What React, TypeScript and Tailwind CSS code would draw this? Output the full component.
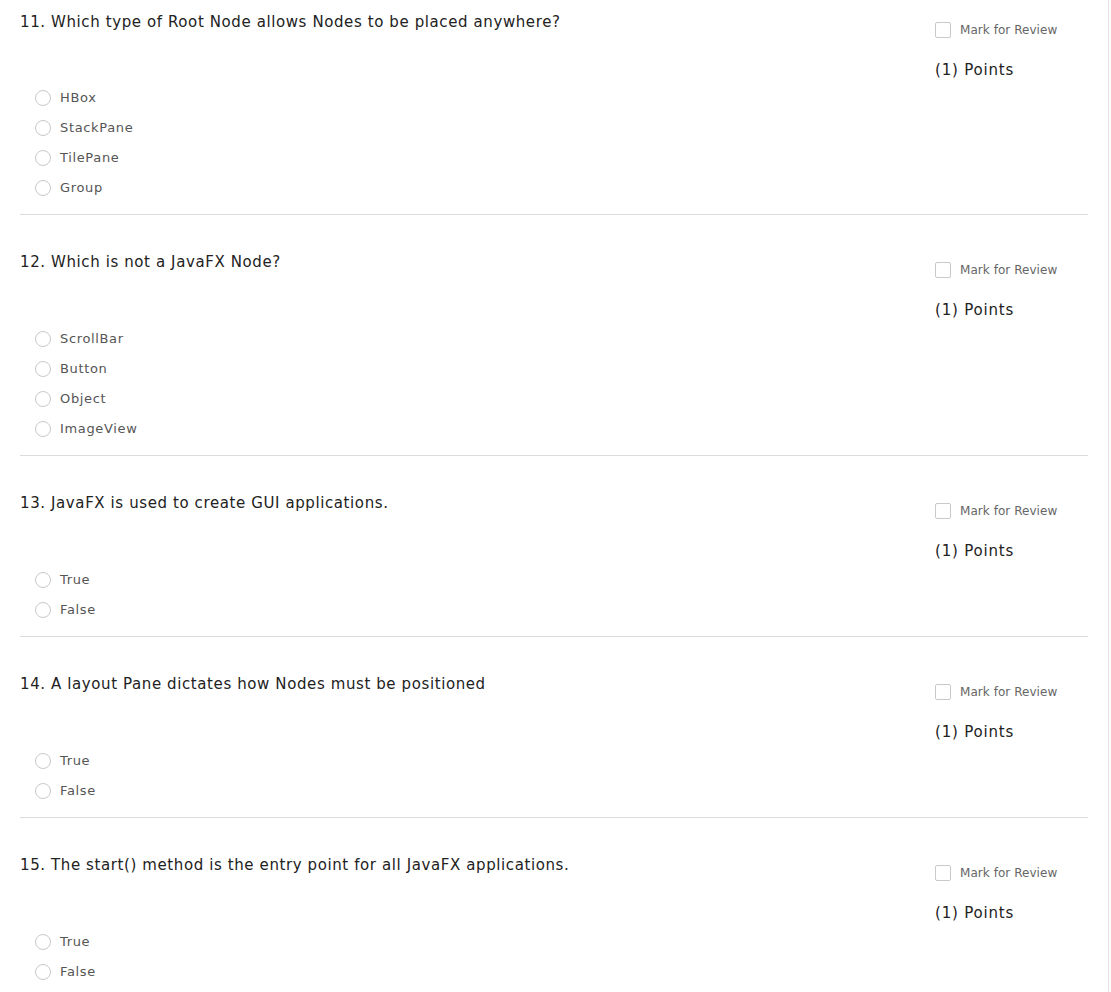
import React from "react";

type Q = { n: number; title: string; options: string[] };

const questions: Q[] = [
  { n: 11, title: "Which type of Root Node allows Nodes to be placed anywhere?", options: ["HBox", "StackPane", "TilePane", "Group"] },
  { n: 12, title: "Which is not a JavaFX Node?", options: ["ScrollBar", "Button", "Object", "ImageView"] },
  { n: 13, title: "JavaFX is used to create GUI applications.", options: ["True", "False"] },
  { n: 14, title: "A layout Pane dictates how Nodes must be positioned", options: ["True", "False"] },
  { n: 15, title: "The start() method is the entry point for all JavaFX applications.", options: ["True", "False"] },
];

function Block({ q, first, last }: { q: Q; first: boolean; last: boolean }) {
  return (
    <div className={`flex ${first ? "pt-[12px]" : "pt-[37px]"} ${last ? "" : "pb-[11px] border-b border-[#dcdcdc]"}`}>
      <div className="flex-1">
        <div className="text-[15px] leading-[20px] text-[#222] tracking-[0.6px]">
          {q.n}. {q.title}
        </div>
        <div className={`${first ? "mt-[51px]" : "mt-[52px]"} pl-[15px]`}>
          {q.options.map((o) => (
            <div key={o} className="flex items-center h-[30px]">
              <span className="w-[16px] h-[16px] rounded-full border border-[#c9c9c9] bg-white shrink-0" />
              <span className="ml-[9px] text-[13px] text-[#555] tracking-[0.65px]">{o}</span>
            </div>
          ))}
        </div>
      </div>
      <div className="w-[153px] shrink-0 pt-[10px]">
        <div className="flex items-center h-[16px]">
          <span className="w-[16px] h-[16px] rounded-[2px] border border-[#c9c9c9] bg-white shrink-0" />
          <span className="ml-[9px] text-[12px] text-[#666] tracking-[0.05px]">Mark for Review</span>
        </div>
        <div className="mt-[22px] text-[15px] leading-[20px] text-[#222] tracking-[0.8px]">(1) Points</div>
      </div>
    </div>
  );
}

export default function App() {
  return (
    <div className="w-[1111px] h-[992px] bg-white overflow-hidden" style={{ fontFamily: '"DejaVu Sans", Verdana, sans-serif' }}>
      <div className="w-[1109px] h-full border-r border-[#e3e3e3] pl-[20px] pr-[20px]">
        {questions.map((q, i) => (
          <Block key={q.n} q={q} first={i === 0} last={i === questions.length - 1} />
        ))}
      </div>
    </div>
  );
}
